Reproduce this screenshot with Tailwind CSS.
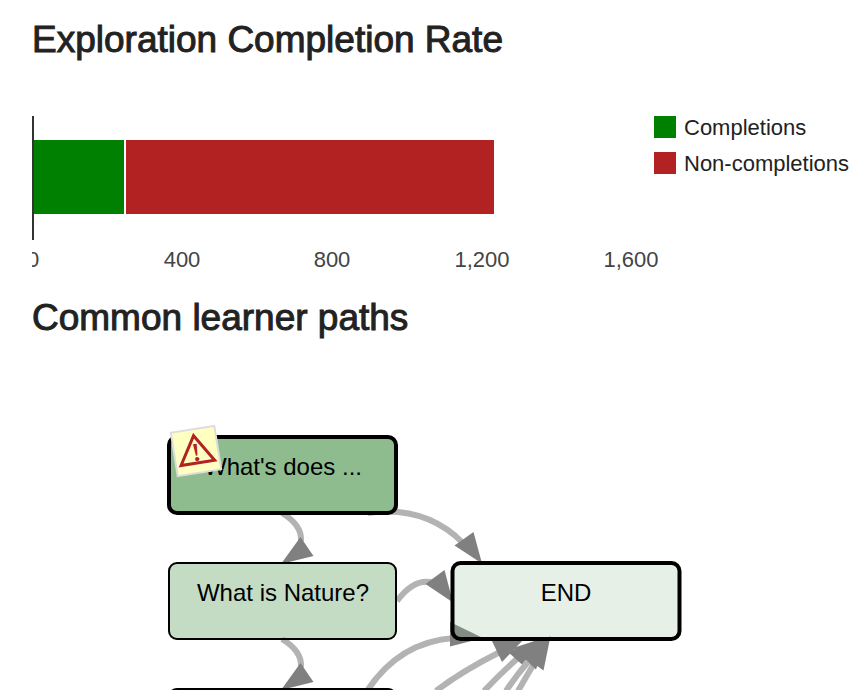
<!DOCTYPE html>
<html lang="en">
<head>
<meta charset="utf-8">
<meta name="viewport" content="width=device-width, initial-scale=1">
<title>Exploration statistics</title>
<script src="https://cdn.jsdelivr.net/npm/@tailwindcss/browser@4"></script>
</head>
<body class="bg-white font-['Liberation_Sans',Arial,sans-serif] text-[#222]">
<main class="flex h-screen flex-col overflow-hidden pt-5">
  <section class="shrink-0 pl-8">
    <h1 class="text-[37px] leading-10 [-webkit-text-stroke:1px_#222]">Exploration Completion Rate</h1>
    <svg class="mt-10 block h-[180px] w-full overflow-hidden text-[22px]" role="img" aria-label="Completions and non-completions">
      <rect x="1" y="40" width="91" height="74" fill="#008000"/>
      <rect x="94" y="40" width="368" height="74" fill="#b22222"/>
      <rect x="0" y="16" width="2" height="124" fill="#333"/>
      <g fill="#444" text-anchor="middle">
        <text x="1" y="167">0</text>
        <text x="150" y="167">400</text>
        <text x="300" y="167">800</text>
        <text x="450" y="167">1,200</text>
        <text x="599" y="167">1,600</text>
      </g>
      <g fill="#222">
        <rect x="622" y="16" width="22" height="22" fill="#008000"/>
        <text x="652" y="35">Completions</text>
        <rect x="622" y="52" width="22" height="22" fill="#b22222"/>
        <text x="652" y="71">Non-completions</text>
      </g>
    </svg>
  </section>
  <section class="flex min-h-0 grow flex-col">
    <h2 class="mt-[18px] pl-8 text-[37px] leading-10 [-webkit-text-stroke:1px_#222]">Common learner paths</h2>
    <svg class="block min-h-0 w-full grow overflow-hidden text-2xl" role="img" aria-label="Learner path graph">
      <g transform="translate(0 -338)">
        <g fill="none" stroke="#b3b3b3" stroke-width="6">
          <path d="M282 513Q302 525 301 541"/>
          <path d="M282 639Q302 651 301 667"/>
          <path d="M368 513Q425 505 463 543"/>
          <path d="M397 601Q415 577 434 583"/>
          <path d="M367 691Q399 642 454 638"/>
          <path d="M436 691Q462 671 500 652"/>
          <path d="M484 691Q501 673 518 658"/>
          <path d="M506 691Q515 677 528 662"/>
          <path d="M518 691Q526 677 535 662"/>
        </g>
        <g fill="#808080">
          <path d="M300.500 537L313.500 556L281 564Z"/>
          <path d="M300.500 663L313.500 682L281 690Z"/>
          <path d="M473.500 532L454.500 545.500L482 563.500Z"/>
          <path d="M444.500 570L425.500 584L453 602.500Z"/>
          <path d="M450 646.500V622L483 638Z"/>
          <path d="M491 639L502 662L525 638Z"/>
          <path d="M508 652L522 664.500L543 638Z"/>
          <path d="M513 648L536 669.500L547 637Z"/>
          <path d="M522 655L543.500 670.500L550.500 636Z"/>
        </g>
        <g stroke="#000" fill="#8fbc8f">
          <rect x="169" y="437" width="227" height="76" rx="8" stroke-width="4"/>
          <rect x="169" y="563" width="227" height="76" rx="8" stroke-width="2" fill-opacity=".53"/>
          <rect x="452.500" y="563" width="227" height="76" rx="8" stroke-width="4" fill-opacity=".22"/>
          <rect x="169" y="689" width="227" height="76" rx="8" stroke-width="2" fill-opacity=".4"/>
        </g>
        <g fill="#000" text-anchor="middle">
          <text x="283" y="475">What's does ...</text>
          <text x="283" y="601">What is Nature?</text>
          <text x="566" y="601">END</text>
        </g>
        <g transform="translate(196 451) rotate(-9)">
          <rect x="-22" y="-22" width="44" height="44" fill="#ffffc2" stroke="#ddd" stroke-width="2"/>
          <path d="M0 -15.500L17 12H-17Z" fill="none" stroke="#b22222" stroke-width="3"/>
          <text class="font-['Liberation_Serif',serif] text-[26px] font-bold" y="10" fill="#b22222" text-anchor="middle">!</text>
        </g>
      </g>
    </svg>
  </section>
</main>
</body>
</html>
